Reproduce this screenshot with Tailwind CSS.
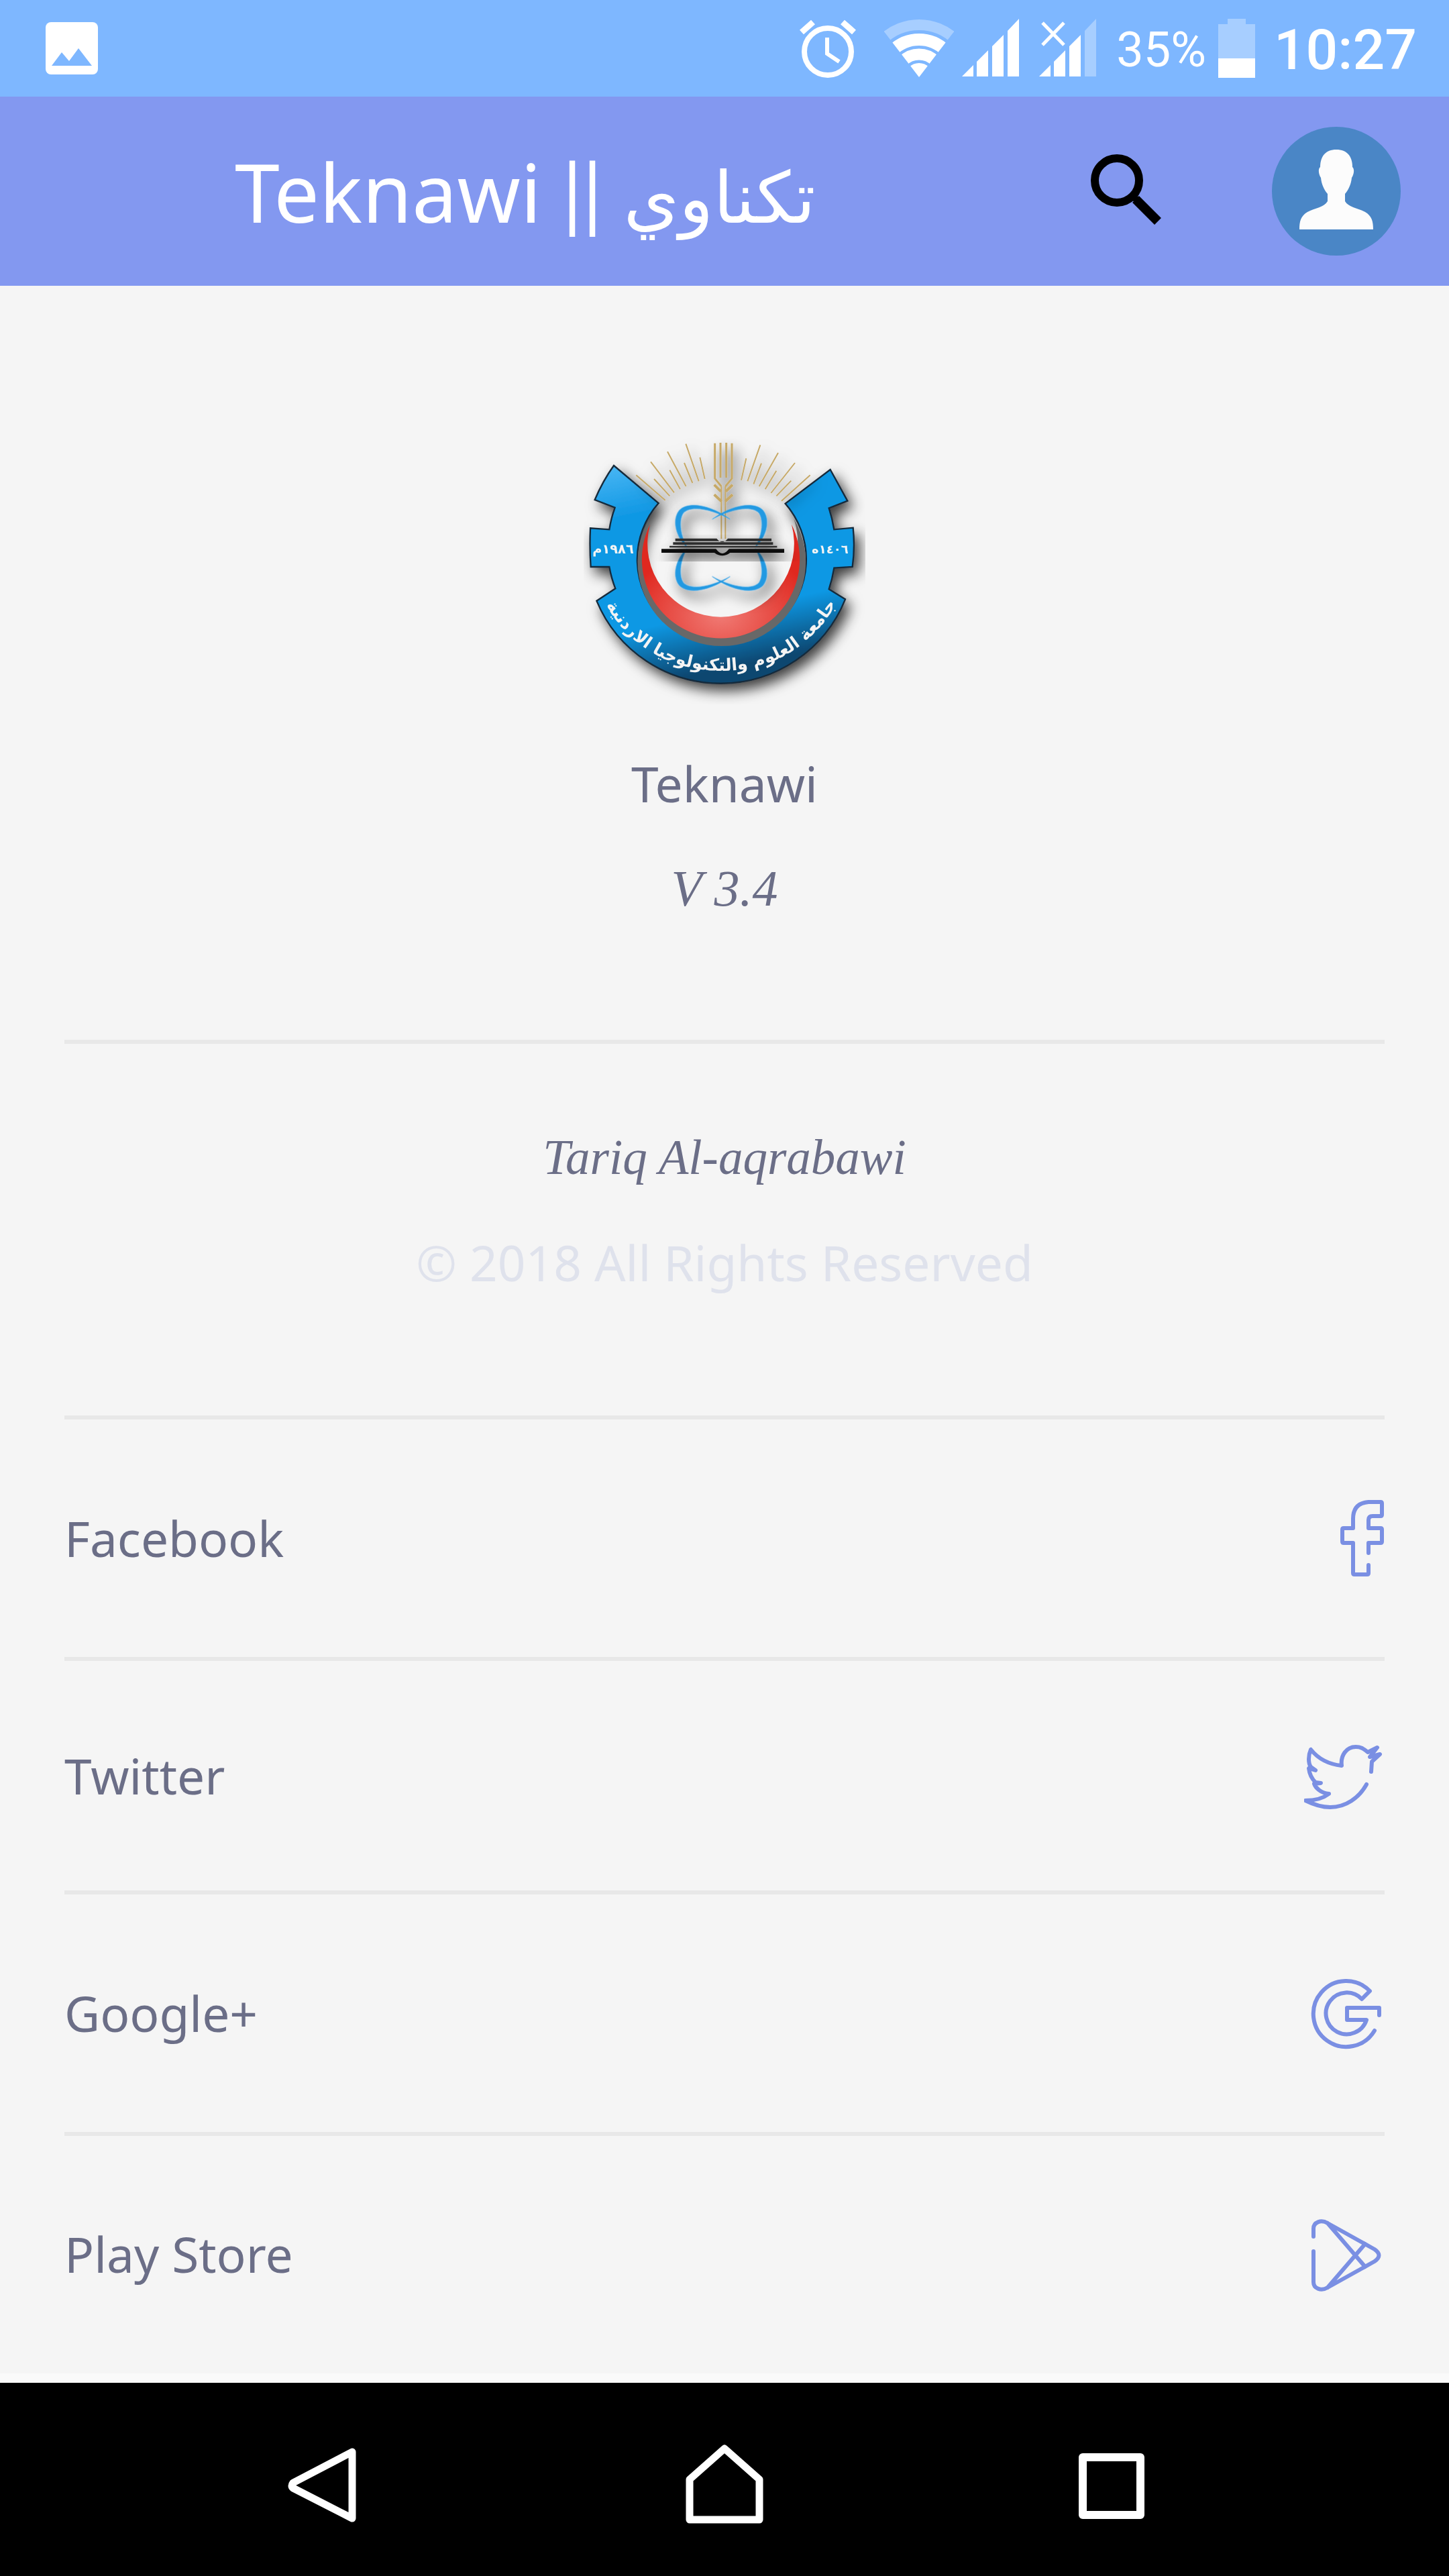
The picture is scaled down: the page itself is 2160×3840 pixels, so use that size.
<!DOCTYPE html>
<html lang="en">
<head>
  <meta charset="UTF-8">
  <meta name="viewport" content="width=device-width, initial-scale=1.0">
  <title>Teknawi - About</title>
  <script src="https://cdn.jsdelivr.net/npm/@tailwindcss/browser@4"></script>
</head>
<body class="min-h-screen flex flex-col bg-[#f5f5f5] text-[#6b6e87] text-[73px] leading-[96px] font-['Noto_Sans',sans-serif]">

  <!-- Status bar -->
  <div class="h-[144px] pl-[68px] pr-[48px] flex items-center bg-[#7eb7ff] text-white">
    <svg class="size-[78px]" viewBox="0 0 78 78" aria-hidden="true">
      <rect width="78" height="78" rx="8" fill="#fff"/>
      <path d="M9 65L24 45L35 58L49 39L69 65Z" fill="#7eb7ff"/>
    </svg>
    <div class="ml-auto flex items-center font-[Roboto,sans-serif]">
      <!-- Alarm -->
      <svg class="w-[84px] h-[88px] mr-[42px]" viewBox="0 0 84 88" fill="none" stroke="#fff" aria-hidden="true">
        <circle cx="42" cy="49" r="35" stroke-width="8"/>
        <path d="M3 20L20 5M64 5L81 20" stroke-width="9"/>
        <path d="M41 28V52L59 64" stroke-width="6"/>
      </svg>
      <!-- Wifi -->
      <svg class="w-[104px] h-[88px] mr-[12px]" viewBox="0 0 104 88" fill="none" stroke="#fff" aria-hidden="true">
        <clipPath id="wedge"><path d="M52 87L-4 14V-4H108V14Z"/></clipPath>
        <g clip-path="url(#wedge)">
          <circle cx="52" cy="87" r="78" stroke-width="16" stroke-opacity=".32"/>
          <circle cx="52" cy="87" r="56" stroke-width="18"/>
          <circle cx="52" cy="87" r="34" stroke-width="17"/>
          <circle cx="52" cy="87" r="21" fill="#fff" stroke="none"/>
        </g>
      </svg>
      <!-- Signal, SIM 1 -->
      <svg class="w-[85px] h-[88px] mr-[30px]" viewBox="0 0 85 88" fill="#fff" aria-hidden="true">
        <path d="M0 86L17 69V86ZM22 64L39 47V86H22ZM45 41L62 24V86H45ZM68 18L85 0V86H68Z"/>
      </svg>
      <!-- Signal, SIM 2 -->
      <svg class="w-[85px] h-[88px] mr-[30px]" viewBox="0 0 85 88" fill="#fff" aria-hidden="true">
        <path d="M0 86L17 69V86ZM22 64L39 47V86H22ZM45 41L62 24V86H45Z"/>
        <path d="M68 18L85 0V86H68Z" fill-opacity=".32"/>
        <path d="M5 6L37 39M37 6L5 39" stroke="#fff" stroke-width="5"/>
      </svg>
      <span class="mr-[18px] pt-[6px] text-[72px] leading-[88px]">35%</span>
      <!-- Battery -->
      <svg class="w-[55px] h-[88px] mr-[28px]" viewBox="0 0 55 88" fill="#fff" aria-hidden="true">
        <path d="M0 8H14V0H41V8H55V59H0Z" fill-opacity=".32"/>
        <path d="M0 59H55V88H0Z"/>
      </svg>
      <span class="pt-[6px] text-[84px] leading-[88px] font-medium">10:27</span>
    </div>
  </div>

  <!-- Header -->
  <header class="h-[282px] pl-[350px] pr-[72px] flex items-center bg-[#8398f0] text-white">
    <h1 class="flex-1 pt-[12px] text-[120px] leading-[160px] whitespace-nowrap">Teknawi <span class="font-[Lato,sans-serif]">||</span> <bdi lang="ar" class="text-[106px] font-['DejaVu_Sans',sans-serif]">تكناوي</bdi></h1>
    <button type="button" aria-label="Search" class="mr-[166px]">
      <svg class="size-[104px] overflow-visible" viewBox="0 0 104 104" fill="none" stroke="#000">
        <circle cx="39" cy="36" r="33" stroke-width="12"/>
        <path d="M67 64L100 97" stroke-width="14"/>
        <path d="M62 59L70 66" stroke-width="10"/>
      </svg>
    </button>
    <button type="button" aria-label="Profile">
      <svg class="size-[192px]" viewBox="0 0 192 192">
        <circle cx="96" cy="96" r="96" fill="#4a86c6"/>
        <path d="M96 34C80 34 72 44 72 60C69 62 69 70 73 76C74 86 78 94 83 100V111C78 120 64 121 53 127C43 133 41 141 41 153H151C151 141 149 133 139 127C128 121 114 120 109 111V100C114 94 118 86 119 76C123 70 123 62 120 60C120 44 112 34 96 34Z" fill="#fcfcfc"/>
      </svg>
    </button>
  </header>

  <main class="flex-1 px-[96px]">

    <!-- App info -->
    <section class="pt-[224px] pb-[178px] flex flex-col items-center border-b-6 border-[#e8e8e8]">
      <svg class="w-[420px] h-[400px] mb-[70px]" viewBox="90 60 1260 1200" role="img" aria-label="University logo">
        <defs>
          <linearGradient id="gear" x1="0" y1="0" x2=".25" y2="1">
            <stop offset="0" stop-color="#4db8f5"/>
            <stop offset=".25" stop-color="#1098e4"/>
            <stop offset=".75" stop-color="#1098e4"/>
            <stop offset="1" stop-color="#08466f"/>
          </linearGradient>
          <radialGradient id="crescent" cx=".5" cy=".8" r=".6">
            <stop offset="0" stop-color="#f07a74"/>
            <stop offset="1" stop-color="#e0281f"/>
          </radialGradient>
          <filter id="shadow" x="-20%" y="-20%" width="150%" height="150%">
            <feDropShadow dx="22" dy="30" stdDeviation="30" flood-color="#000" flood-opacity=".75"/>
          </filter>
          <path id="rim" d="M165 770C290 1020 500 1110 712 1110C915 1110 1120 1015 1245 765"/>
          <path id="orbit" d="M745 432C660 370 560 350 518 392C480 440 510 520 552 556C524 510 512 440 535 405C570 365 670 390 745 432Z"/>
        </defs>

        <!-- Gear ring -->
        <g filter="url(#shadow)">
          <path d="M225 192L425 360A378 378 0 1 0 992 362L1193 210L1270 350L1187 382Q1202 428 1210 478L1295 470Q1304 560 1292 645L1210 650Q1202 700 1187 745L1260 790A601 601 0 0 1 148 797L232 742Q214 696 205 645H122Q116 560 120 472L205 478Q212 430 230 380L140 345Q176 260 225 192Z" fill="url(#gear)" stroke="#14293a" stroke-width="7"/>
        </g>
        <!-- Crescent -->
        <path d="M385 430A376 376 0 1 0 1030 430A340 340 0 1 1 385 430Z" fill="#686868"/>
        <path d="M387 455A353 353 0 1 0 1020 455A328 328 0 1 1 387 455Z" fill="url(#crescent)"/>

        <!-- Rays and wheat -->
        <g filter="url(#shadow)" fill="none" stroke="#c6a968">
          <path stroke-width="6" d="M325 235L455 347M405 252L475 328M390 175L495 313M475 212L522 298M465 130L548 285M540 180L577 270M547 95L605 262M610 155L632 252M880 100L823 262M817 160L795 257M885 182L850 275M960 135L875 285M952 215L902 298M1035 180L928 315M1018 260L952 328M1103 235L975 350"/>
          <path stroke-width="9" d="M677 92V250L706 285M702 90V246M728 90V246M753 92V250L724 285"/>
          <path stroke-width="12" d="M674 278L704 308M674 322L706 352M756 278L726 308M756 322L724 352"/>
          <path stroke-width="6" d="M706 285V520M724 285V520"/>
        </g>

        <!-- Orbits -->
        <g filter="url(#shadow)" fill="#2399e2" stroke="#2399e2" stroke-width="2">
          <use href="#orbit"/>
          <use href="#orbit" transform="matrix(-1 0 0 1 1410 0)"/>
          <use href="#orbit" transform="matrix(1 0 0 -1 0 1120)"/>
          <use href="#orbit" transform="matrix(-1 0 0 -1 1410 1120)"/>
        </g>

        <!-- Book -->
        <g filter="url(#shadow)">
          <path d="M500 518H685Q710 550 735 518H930V530H500ZM490 535H937V546H490ZM474 551H955V559H474Z" fill="#2e2e2e"/>
          <path d="M438 565H682Q710 605 740 565H987V582H745Q710 608 675 582H438Z" fill="#111"/>
        </g>

        <g fill="#f4f4f4" font-family="DejaVu Sans, sans-serif" font-weight="700" text-anchor="middle">
          <text x="222" y="584" font-size="58">١٩٨٦م</text>
          <text x="1192" y="584" font-size="54">١٤٠٦ه</text>
          <text font-size="76"><textPath href="#rim" startOffset="50%">جامعة العلوم والتكنولوجيا الاردنية</textPath></text>
        </g>
      </svg>
      <h2 class="mb-[60px]">Teknawi</h2>
      <p class="text-[76px] italic font-['Liberation_Serif',serif]">V 3.4</p>
    </section>

    <!-- Author -->
    <section class="pt-[122px] pb-[180px] flex flex-col items-center border-b-6 border-[#e8e8e8]">
      <p class="mb-[60px] italic font-['Liberation_Serif',serif]">Tariq Al-aqrabawi</p>
      <p class="text-[#dfe2ec]">© 2018 All Rights Reserved</p>
    </section>

    <!-- Links -->
    <nav>
      <a href="#facebook" class="h-[360px] flex items-center justify-between border-b-6 border-[#e8e8e8]">
        Facebook
        <svg class="size-[120px]" viewBox="0 0 120 120" fill="none" stroke="#7a8fe3" stroke-width="6" stroke-linecap="round" stroke-linejoin="round" aria-hidden="true">
          <path d="M96 82V67H114Q116 67 116 65V47Q116 45 114 45H96V33Q96 27 102 27H114Q116 27 116 25V8Q116 6 114 6H96Q73 8 73 31V45H59Q57 45 57 47V65Q57 67 59 67H73V112Q73 114 75 114H94Q96 114 96 112V100"/>
        </svg>
      </a>
      <a href="#twitter" class="h-[348px] flex items-center justify-between border-b-6 border-[#e8e8e8]">
        Twitter
        <svg class="size-[120px]" viewBox="0 0 120 120" fill="none" stroke="#7a8fe3" stroke-width="6" stroke-linecap="round" stroke-linejoin="round" aria-hidden="true">
          <path d="M100 54L101 39L113 28L98 32L109 18L95 25C88 19 84 17 77 17C63 17 54 30 56 45C37 43 22 36 10 21C6 30 6 41 10 47L17 52L7 49C8 58 12 65 17 70L25 71L15 72C17 78 25 86 37 87C28 94 17 97 2 97C14 103 26 107 39 107C62 107 82 93 93 73"/>
        </svg>
      </a>
      <a href="#google" class="h-[360px] flex items-center justify-between border-b-6 border-[#e8e8e8]">
        Google+
        <svg class="size-[120px]" viewBox="0 0 120 120" fill="none" stroke="#7a8fe3" stroke-width="6" stroke-linecap="round" stroke-linejoin="round" aria-hidden="true">
          <path d="M105 86A49 49 0 1 1 98 27L86 39A31 31 0 1 0 93 70H64V52H112V63"/>
        </svg>
      </a>
      <a href="#play-store" class="h-[352px] flex items-center justify-between">
        Play Store
        <svg class="size-[120px]" viewBox="0 0 120 120" fill="none" stroke="#7a8fe3" stroke-width="6" stroke-linecap="round" stroke-linejoin="round" aria-hidden="true">
          <path d="M14 34V22C14 13 25 8 35 14L105 53Q118 62 105 71L35 110C25 116 14 111 14 102V56M35 14L91 79M35 110L91 45"/>
        </svg>
      </a>
    </nav>
  </main>

  <div class="h-[14px] bg-[#fafafa]"></div>

  <!-- System navigation -->
  <footer class="h-[288px] flex items-center justify-center gap-[448px] bg-black">
    <button type="button" aria-label="Back">
      <svg class="size-[140px]" viewBox="0 0 140 140" fill="none" stroke="#fff" stroke-width="11" stroke-linejoin="round">
        <path d="M103 29V128L15 83Q11 80 15 75Z"/>
      </svg>
    </button>
    <button type="button" aria-label="Home">
      <svg class="size-[140px]" viewBox="0 0 140 140" fill="none" stroke="#fff" stroke-width="11" stroke-linejoin="round">
        <path d="M70 24L122 70V130H18V70Z"/>
      </svg>
    </button>
    <button type="button" aria-label="Recent apps">
      <svg class="size-[140px]" viewBox="0 0 140 140" fill="none" stroke="#fff" stroke-width="12" stroke-linejoin="round">
        <rect x="16" y="37" width="86" height="86"/>
      </svg>
    </button>
  </footer>

</body>
</html>
